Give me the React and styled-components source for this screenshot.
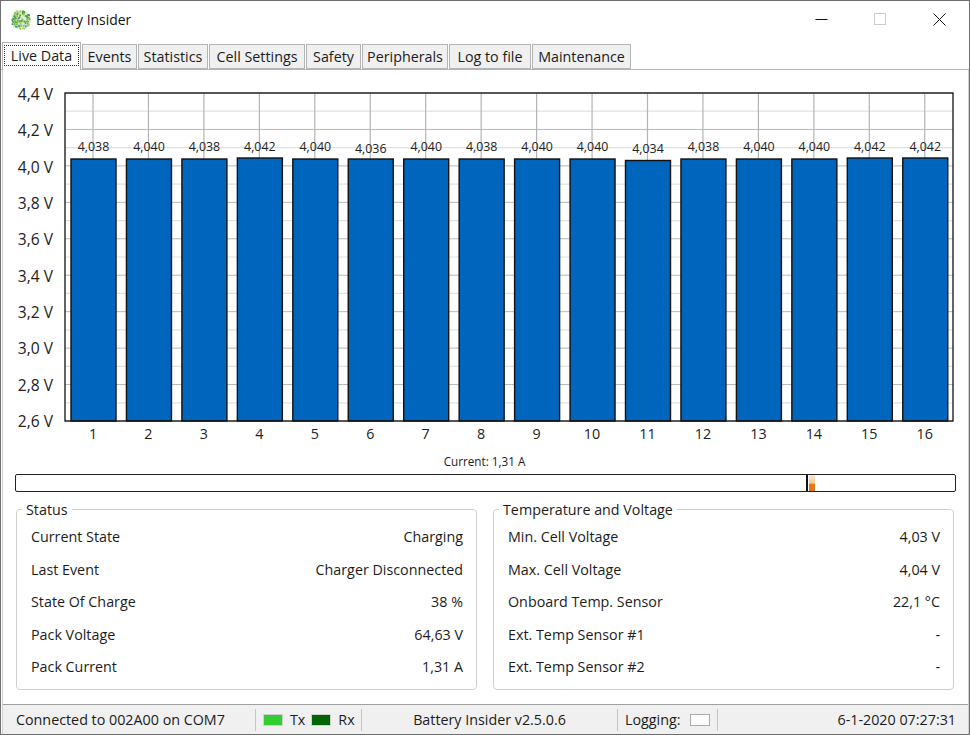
import React from "react";
import styled, { createGlobalStyle } from "styled-components";

const Global = createGlobalStyle`
  html, body { margin: 0; padding: 0; background: #fff; }
  * { box-sizing: border-box; }
`;

const FONT = `"Open Sans", "Noto Sans", "Liberation Sans", sans-serif`;

const Window = styled.div`
  width: 970px;
  height: 735px;
  display: flex;
  flex-direction: column;
  background: #fff;
  border: 1px solid #6f6f6f;
  font-family: ${FONT};
  font-size: 14.3px;
  color: #1c1c1c;
  overflow: hidden;
`;
const TitleBar = styled.div`
  height: 37px;
  flex: none;
  display: flex;
  align-items: center;
  padding-left: 9px;
`;
const AppName = styled.div`
  margin-left: 4px;
  font-size: 13.9px;
  color: #111;
  flex: 1;
`;
const WinButton = styled.div`
  width: 59px;
  height: 36px;
  display: flex;
  align-items: center;
  justify-content: center;
`;
const TabStrip = styled.div`
  height: 32px;
  flex: none;
  display: flex;
  align-items: flex-end;
  border-bottom: 1px solid #b4b4b4;
`;
const Tab = styled.div`
  width: ${(p) => p.$w}px;
  height: ${(p) => (p.$active ? 28 : 25)}px;
  margin-bottom: ${(p) => (p.$active ? -1 : 0)}px;
  margin-left: 1px;
  background: ${(p) => (p.$active ? "#fff" : "#f0f0f0")};
  border: 1px solid #b4b4b4;
  border-bottom: ${(p) => (p.$active ? "none" : "1px solid #b4b4b4")};
  display: flex;
  align-items: center;
  justify-content: center;
  padding: ${(p) => (p.$active ? "2px 1px 2px" : "0")};
  white-space: nowrap;
  z-index: ${(p) => (p.$active ? 1 : 0)};
`;
const FocusLabel = styled.span`
  flex: 1;
  align-self: stretch;
  display: flex;
  align-items: center;
  justify-content: center;
  outline: 1px dotted #333;
  outline-offset: -1px;
  margin-bottom: 2px;
`;
const Panel = styled.div`
  flex: 1;
  min-height: 0;
  margin: 0 0 0 1px;
  border-left: 1px solid #d0d0d0;
  border-right: 1px solid #d0d0d0;
  width: 967px;
  display: flex;
  flex-direction: column;
`;
const ChartSvg = styled.svg`
  display: block;
  flex: none;
  margin-left: -3px;
  font-family: ${FONT};
`;
const CurrentLabel = styled.div`
  height: 22px;
  flex: none;
  font-size: 11.7px;
  line-height: 18px;
  text-align: center;
  padding-right: 2px;
`;
const CurrentBar = styled.div`
  flex: none;
  height: 18px;
  margin: 0 12px 0 12px;
  border: 1.5px solid #222;
  border-radius: 2px;
  display: flex;
  background: #fff;
`;
const CurrentNeg = styled.div`
  width: 792px;
  flex: none;
  border-right: 2px solid #111;
`;
const CurrentPos = styled.div`
  width: 6px;
  margin-left: 1px;
  flex: none;
  background: linear-gradient(#f9e8d0 0, #f3c893 52%, #e27b1e 56%, #e0771b 100%);
`;
const Groups = styled.div`
  flex: none;
  display: grid;
  grid-template-columns: 461px 461px;
  column-gap: 16px;
  padding: 9px 0 0 13px;
`;
const Group = styled.fieldset`
  margin: 0;
  height: 189px;
  padding: 2.5px 13px 0 14px;
  border: 1px solid #cfcfcf;
  border-radius: 4px;
  min-width: 0;
  display: block;
`;
const Legend = styled.legend`
  padding: 0 4px;
  margin-left: -9px;
  line-height: 17px;
`;
const Row = styled.div`
  height: 32.5px;
  display: flex;
  justify-content: space-between;
  align-items: center;
`;
const StatusBar = styled.div`
  margin-top: auto;
  height: 30px;
  flex: none;
  background: #f0f0f0;
  border-top: 1px solid #a0a0a0;
  display: flex;
  align-items: center;
`;
const Segment = styled.div`
  width: ${(p) => p.$w}px;
  flex: ${(p) => (p.$grow ? 1 : "none")};
  height: 22px;
  display: flex;
  align-items: center;
  justify-content: ${(p) => p.$justify || "flex-start"};
  padding: ${(p) => p.$pad || "0"};
  border-right: ${(p) => (p.$sep ? "1px solid #c6c6c6" : "none")};
  white-space: nowrap;
`;
const Lamp = styled.span`
  width: 20px;
  height: 12px;
  flex: none;
  background: ${(p) => p.$color};
  border: 1px solid #cfcfcf;
`;
const LogLamp = styled(Lamp)`
  margin-left: 10px;
  border-color: #a8a8a8;
`;
const LampLabel = styled.span`
  margin: 0 6px 0 7px;
`;

const BARS = [4.038, 4.04, 4.038, 4.042, 4.04, 4.036, 4.04, 4.038, 4.04, 4.04, 4.034, 4.038, 4.04, 4.04, 4.042, 4.042];
const TICKS = ["4,4", "4,2", "4,0", "3,8", "3,6", "3,4", "3,2", "3,0", "2,8", "2,6"];
const OY = 70; // page y of the chart's top
const TOP = 93 - OY;
const BOT = 421 - OY;
const STEP = (BOT - TOP) / 9;
const barCx = (i) => 93.5 + i * 55.45;
const barTop = (v) => (v > 4.041 ? 158 : v > 4.035 ? 159 : 160.5) - OY;
const labelBase = (v) => (v < 4.037 ? 152.5 : 151) - OY;

function Chart() {
  return (
    <ChartSvg width="968" height="382" viewBox="0 0 968 382">
      {TICKS.map((_, i) => (
        <line key={i} x1="65" x2="953" y1={TOP + i * STEP} y2={TOP + i * STEP} stroke="#b8b8b8" strokeWidth="1" />
      ))}
      {TICKS.slice(0, 9).map((_, i) => (
        <line key={i} x1="65" x2="953" y1={TOP + (i + 0.5) * STEP} y2={TOP + (i + 0.5) * STEP} stroke="#e0e0e0" strokeWidth="1.2" />
      ))}
      {BARS.map((_, i) => (
        <line key={i} x1={barCx(i) - 0.5} x2={barCx(i) - 0.5} y1={TOP} y2={BOT} stroke="#b4b4b4" strokeWidth="1.2" />
      ))}
      {TICKS.map((t, i) => (
        <text key={t} x="53" y={100 + i * 36.33 - OY} textAnchor="end" fontSize="15.6" fill="#222">
          {t} V
        </text>
      ))}
      {BARS.map((v, i) => {
        const y = barTop(v);
        return (
          <g key={i}>
            <rect x={barCx(i) - 22.5} y={y} width="45" height={BOT - y} fill="#0066bd" stroke="#111" strokeWidth="1.4" />
            <text x={barCx(i)} y={labelBase(v)} textAnchor="middle" fontSize="12.4" fill="#222">
              {v.toFixed(3).replace(".", ",")}
            </text>
            <text x={barCx(i) - 0.5} y={BOT + 18} textAnchor="middle" fontSize="14.3" fill="#222">
              {i + 1}
            </text>
          </g>
        );
      })}
      <rect x="65" y={TOP} width="888" height={BOT - TOP} fill="none" stroke="#111" strokeWidth="1.3" />
    </ChartSvg>
  );
}

const DOTS = (() => {
  const out = [];
  let s = 23;
  const rnd = () => ((s = (s * 16807) % 2147483647) / 2147483647);
  const cols = ["#5aa53c", "#8dc63f", "#4b9a3a", "#a7d064", "#6fb544", "#b7cf8a", "#3f9a78"];
  for (let i = 0; i < 95; i++) {
    const a = rnd() * Math.PI * 2;
    const r = Math.sqrt(rnd()) * 9.6;
    out.push({ x: 11 + r * Math.cos(a), y: 11 + r * Math.sin(a), c: cols[Math.floor(rnd() * cols.length)] });
  }
  return out;
})();

function Logo() {
  return (
    <svg width="22" height="22" viewBox="0 0 22 22">
      <circle cx="11" cy="11" r="10" fill="#dfeccd" />
      {DOTS.map((d, i) => (
        <circle key={i} cx={d.x} cy={d.y} r="0.95" fill={d.c} />
      ))}
    </svg>
  );
}

const TABS = [
  ["Live Data", 79],
  ["Events", 55],
  ["Statistics", 70],
  ["Cell Settings", 96],
  ["Safety", 55],
  ["Peripherals", 86],
  ["Log to file", 82],
  ["Maintenance", 99],
];
const STATUS = [
  ["Current State", "Charging"],
  ["Last Event", "Charger Disconnected"],
  ["State Of Charge", "38 %"],
  ["Pack Voltage", "64,63 V"],
  ["Pack Current", "1,31 A"],
];
const TEMP = [
  ["Min. Cell Voltage", "4,03 V"],
  ["Max. Cell Voltage", "4,04 V"],
  ["Onboard Temp. Sensor", "22,1 °C"],
  ["Ext. Temp Sensor #1", "-"],
  ["Ext. Temp Sensor #2", "-"],
];

function InfoGroup({ title, rows }) {
  return (
    <Group>
      <Legend>{title}</Legend>
      {rows.map(([k, v]) => (
        <Row key={k}>
          <span>{k}</span>
          <span>{v}</span>
        </Row>
      ))}
    </Group>
  );
}

export default function App() {
  return (
    <Window>
      <Global />
      <TitleBar>
        <Logo />
        <AppName>Battery Insider</AppName>
        <WinButton>
          <svg width="13" height="13" viewBox="0 0 13 13"><path d="M0.5 6.5H12.5" stroke="#111" strokeWidth="1" /></svg>
        </WinButton>
        <WinButton>
          <svg width="13" height="13" viewBox="0 0 13 13"><rect x="0.5" y="0.5" width="11" height="11" fill="none" stroke="#ccc" /></svg>
        </WinButton>
        <WinButton>
          <svg width="13" height="13" viewBox="0 0 13 13"><path d="M0.5 0.5L12.5 12.5M12.5 0.5L0.5 12.5" stroke="#111" strokeWidth="1" /></svg>
        </WinButton>
      </TitleBar>
      <TabStrip>
        {TABS.map(([t, w], i) => (
          <Tab key={t} $w={w} $active={i === 0}>
            {i === 0 ? <FocusLabel>{t}</FocusLabel> : t}
          </Tab>
        ))}
      </TabStrip>
      <Panel>
        <Chart />
        <CurrentLabel>Current: 1,31 A</CurrentLabel>
        <CurrentBar>
          <CurrentNeg />
          <CurrentPos />
        </CurrentBar>
        <Groups>
          <InfoGroup title="Status" rows={STATUS} />
          <InfoGroup title="Temperature and Voltage" rows={TEMP} />
        </Groups>
        <StatusBar>
          <Segment $w={253} $sep $pad="0 0 0 13px">Connected to 002A00 on COM7</Segment>
          <Segment $w={106} $sep $pad="0 0 0 7px">
            <Lamp $color="#32cd32" />
            <LampLabel>Tx</LampLabel>
            <Lamp $color="#006400" />
            <LampLabel>Rx</LampLabel>
          </Segment>
          <Segment $w={256} $sep $justify="center">Battery Insider v2.5.0.6</Segment>
          <Segment $w={100} $sep $pad="0 0 0 7px">
            Logging:
            <LogLamp $color="#fbfbfb" />
          </Segment>
          <Segment $grow $justify="flex-end" $pad="0 12px 0 0">6-1-2020 07:27:31</Segment>
        </StatusBar>
      </Panel>
    </Window>
  );
}
